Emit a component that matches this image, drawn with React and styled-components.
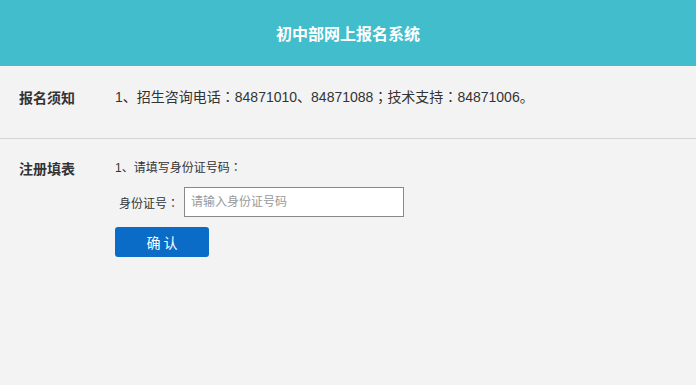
import React from 'react';
import styled, { createGlobalStyle } from 'styled-components';

const GlobalStyle = createGlobalStyle`
  html, body {
    margin: 0;
    padding: 0;
    background: #f3f3f3;
  }
  body {
    font-family: "Liberation Sans", "Noto Sans CJK SC", sans-serif;
    color: #333;
  }
`;

const Page = styled.div`
  min-height: 385px;
  background: #f3f3f3;
`;

const Header = styled.header`
  height: 66px;
  background: #42bdcb;
  display: flex;
  align-items: center;
  justify-content: center;
  color: #fff;
  font-size: 16px;
  font-weight: bold;
  font-family: "Noto Sans CJK SC", sans-serif;
`;

const Section = styled.section`
  display: flex;
  padding: ${p => p.$pad};
  border-bottom: ${p => (p.$divider ? '1px solid #d4d4d4' : 'none')};
`;

const Label = styled.div`
  width: 96px;
  padding-left: 19px;
  flex-shrink: 0;
  font-size: 14px;
  font-weight: bold;
  line-height: 20px;
  font-family: "Noto Sans CJK SC", sans-serif;
  color: #333;
`;

const Notice = styled.div`
  font-size: 14px;
  line-height: 20px;
  color: #333;
`;

// full-width colon / semicolon drawn centred, as in the original font
const Punct = styled.span`
  font-family: "Noto Sans CJK JP", sans-serif;
  line-height: 1;
`;

const Form = styled.div`
  display: flex;
  flex-direction: column;
  align-items: flex-start;
`;

const Step = styled.div`
  font-size: 12px;
  line-height: 20px;
  color: #333;
`;

const Field = styled.div`
  display: flex;
  align-items: center;
  margin-top: 9px;
`;

const FieldLabel = styled.label`
  width: 69px;
  padding-left: 4px;
  box-sizing: border-box;
  font-size: 12px;
  color: #333;
`;

const Input = styled.input`
  width: 220px;
  height: 30px;
  box-sizing: border-box;
  border: 1px solid #888;
  background: #fff;
  padding: 0 6px;
  font-size: 12px;
  font-family: "Liberation Sans", "Noto Sans CJK SC", sans-serif;
  outline: none;
  &::placeholder {
    color: #999;
  }
`;

const Button = styled.button`
  margin-top: 10px;
  width: 94px;
  height: 30px;
  border: none;
  border-radius: 3px;
  background: #0a6cc6;
  color: #fff;
  font-size: 14px;
  font-family: "Noto Sans CJK SC", sans-serif;
  cursor: pointer;
`;

export default function App() {
  return (
    <Page>
      <GlobalStyle />
      <Header>初中部网上报名系统</Header>
      <Section $pad="21px 0 31px" $divider>
        <Label>报名须知</Label>
        <Notice>
          1、招生咨询电话<Punct>：</Punct>84871010、84871088<Punct>；</Punct>技术支持<Punct>：</Punct>84871006。
        </Notice>
      </Section>
      <Section $pad="19px 0 0">
        <Label>注册填表</Label>
        <Form>
          <Step>1、请填写身份证号码<Punct>：</Punct></Step>
          <Field>
            <FieldLabel>身份证号<Punct>：</Punct></FieldLabel>
            <Input placeholder="请输入身份证号码" />
          </Field>
          <Button>确 认</Button>
        </Form>
      </Section>
    </Page>
  );
}
